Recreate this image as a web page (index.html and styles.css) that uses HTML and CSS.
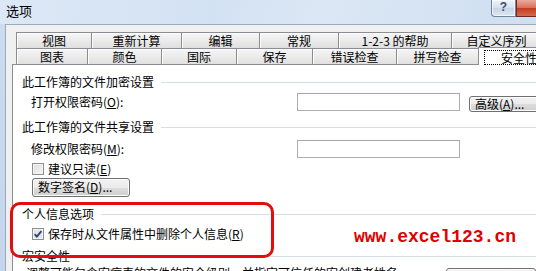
FILE: index.html
```html
<!DOCTYPE html>
<html lang="zh-CN">
<head>
<meta charset="utf-8">
<title>选项</title>
<link rel="stylesheet" href="styles.css">
</head>
<body>
<div class="window">
  <div class="titlebar">
    <span class="title">选项</span>
    <div class="caption-btns">
      <span class="cap-help">?</span>
      <span class="cap-close"></span>
    </div>
  </div>
  <div class="dialog">
    <div class="tabs">
      <div class="tabrow row1">
        <div class="tab w75">视图</div>
        <div class="tab w90">重新计算</div>
        <div class="tab w78">编辑</div>
        <div class="tab w79">常规</div>
        <div class="tab w113">1-2-3 的帮助</div>
        <div class="tab w90">自定义序列</div>
      </div>
      <div class="tabrow row2">
        <div class="tab w71">图表</div>
        <div class="tab w74">颜色</div>
        <div class="tab w75">国际</div>
        <div class="tab w76">保存</div>
        <div class="tab w84">错误检查</div>
        <div class="tab w82">拼写检查</div>
        <div class="tab selected w70"><span class="focus">安全性</span></div>
      </div>
    </div>
    <div class="panel">
      <div class="heading h1">此工作簿的文件加密设置</div>
      <div class="field f1">
        <span class="label">打开权限密码(<u>O</u>):</span>
        <span class="input"></span>
        <span class="btn btn-adv">高级(<u>A</u>)...</span>
      </div>
      <div class="heading h2">此工作簿的文件共享设置</div>
      <div class="field f2">
        <span class="label">修改权限密码(<u>M</u>):</span>
        <span class="input"></span>
      </div>
      <div class="check c1">
        <span class="box"></span>
        <span>建议只读(<u>E</u>)</span>
      </div>
      <div class="btn btn-sign">数字签名(<u>D</u>)...</div>
      <div class="heading h3">个人信息选项</div>
      <div class="check c2">
        <svg class="box-svg" width="12" height="12" viewBox="0 0 12 12">
          <rect x="0.5" y="0.5" width="11" height="11" fill="#f4f4f4" stroke="#8e8f8f"/>
          <rect x="2" y="2" width="8" height="8" fill="#e2e5ea"/>
          <path d="M2.6 6.2 L4.8 8.6 L9.4 3.2" fill="none" stroke="#2b3f74" stroke-width="1.8"/>
        </svg>
        <span>保存时从文件属性中删除个人信息(<u>R</u>)</span>
      </div>
      <div class="heading h4">宏安全性</div>
      <div class="macro-row">
        <span class="macro-text">调整可能包含宏病毒的文件的安全级别，并指定可信任的宏创建者姓名。</span>
        <span class="btn btn-macro">宏安全性(<u>S</u>)...</span>
      </div>
    </div>
  </div>
  <div class="highlight"></div>
  <div class="watermark">www.excel123.cn</div>
</div>
</body>
</html>
```

FILE: styles.css
```css
* { box-sizing: border-box; margin: 0; padding: 0; }

body {
  width: 536px;
  height: 271px;
  overflow: hidden;
  font-family: "Noto Sans CJK SC", "Liberation Sans", sans-serif;
  font-size: 12px;
  line-height: 14px;
  color: #000;
  background: #f0f0f0;
}

u { text-decoration: underline; }

.window {
  position: relative;
  width: 536px;
  height: 271px;
  overflow: hidden;
  display: flex;
  flex-direction: column;
  background: linear-gradient(#cddcee, #c4d6ec);
}

.titlebar {
  flex: none;
  height: 24px;
  display: flex;
  justify-content: space-between;
  background: linear-gradient(100deg, #dce8f5 0%, #d3e2f3 40%, #dbe7f4 60%, #cfdff1 100%);
}

.title {
  padding: 3px 0 0 6px;
  font-size: 13px;
  line-height: 15px;
}

.caption-btns {
  display: flex;
  align-items: flex-start;
}

.cap-help {
  width: 25px;
  height: 17px;
  border: 1px solid #6f839f;
  border-top: none;
  border-radius: 0 0 0 4px;
  background: linear-gradient(#eef3f9, #d6e1ee 50%, #c7d5e6 51%, #dbe6f2);
  color: #3c4e6a;
  font-family: "Liberation Sans", sans-serif;
  font-weight: bold;
  font-size: 12px;
  line-height: 15px;
  text-align: center;
  box-shadow: inset 0 0 0 1px rgba(255,255,255,0.6);
}

.cap-close {
  width: 20px;
  height: 17px;
  border: 1px solid #6d2a20;
  border-top: none;
  border-right: none;
  background: linear-gradient(#e9a99b, #d7705a 50%, #c23c1f 51%, #d46a4e);
}

.dialog {
  flex: 1;
  display: flex;
  flex-direction: column;
  margin-left: 5px;
  border-top: 1px solid #9aa9bb;
  border-left: 1px solid #9aa9bb;
  background: #f0f0f0;
  padding: 7px 0 0 6px;
}

.tabs {
  flex: none;
  margin-left: 3px;
}

.tabrow {
  display: flex;
  white-space: nowrap;
}

.row1 { height: 16px; margin-left: 1px; }
.row2 { height: 17px; margin-left: 1px; position: relative; }

.tab {
  flex: none;
  height: 100%;
  border-top: 1px solid #8a8d94;
  border-left: 1px solid #8a8d94;
  box-shadow: inset 1px 1px 0 #fdfdfd;
  background: linear-gradient(#f5f5f5, #ebebeb 50%, #dfdfdf);
  text-align: center;
  line-height: 15px;
}

.row2 .tab { line-height: 16px; }

.tab.selected {
  height: 18px;
  margin-top: -1px;
  background: #fff;
  box-shadow: none;
  text-align: left;
  padding: 2px 0 0 5px;
  line-height: 13px;
  position: relative;
  z-index: 1;
}

.focus {
  display: inline-block;
  border: 1px dotted #000;
  padding: 0 4px 0 16px;
  width: 70px;
  height: 15px;
  line-height: 13px;
}

.w70 { width: 70px; }
.w71 { width: 71px; }
.w74 { width: 74px; }
.w75 { width: 75px; }
.w76 { width: 76px; }
.w78 { width: 78px; }
.w79 { width: 79px; }
.w82 { width: 82px; }
.w84 { width: 84px; }
.w90 { width: 90px; }
.w113 { width: 113px; }

.panel {
  flex: 1;
  display: flex;
  flex-direction: column;
  border-top: 1px solid #8a8d94;
  border-left: 1px solid #8a8d94;
  background: #fff;
  padding: 10px 0 0 9px;
  margin-top: -1px;
  position: relative;
  z-index: 0;
}

.heading {
  display: flex;
  align-items: center;
  height: 14px;
  line-height: 14px;
  white-space: nowrap;
}

.heading::after {
  content: "";
  flex: 1;
  height: 1px;
  margin-left: 7px;
  background: #d5dfe5;
}

.h2 { margin-top: 8px; }
.h3 { margin-top: 10px; }
.h4 { margin-top: 8px; }

.field {
  display: flex;
  align-items: flex-start;
  height: 19px;
  padding-left: 9px;
  margin-top: 4px;
  white-space: nowrap;
}

.field > * { flex: none; }

.f2 { margin-top: 6px; }

.label {
  width: 266px;
  line-height: 15px;
  margin-top: 1px;
}

.input {
  width: 163px;
  height: 18px;
  border: 1px solid #abadb3;
  border-top-color: #a4a6ad;
  background: #fff;
}

.btn {
  display: inline-block;
  border: 1px solid #707070;
  border-radius: 3px;
  background: linear-gradient(#f2f2f2, #ebebeb 50%, #dddddd 51%, #cfcfcf);
  box-shadow: inset 0 0 0 1px #fcfcfc;
  white-space: nowrap;
}

.btn-adv {
  margin-left: 9px;
  margin-top: 3px;
  width: 78px;
  height: 16px;
  line-height: 13px;
  padding-left: 5px;
}

.check {
  display: flex;
  align-items: center;
  gap: 4px;
  height: 14px;
  padding-left: 10px;
  white-space: nowrap;
}

.c1 { margin-top: 3px; }
.c2 { margin-top: 6px; }

.box {
  flex: none;
  width: 12px;
  height: 12px;
  border: 1px solid #8e8f8f;
  background: linear-gradient(135deg, #dcdcdc, #f6f6f6);
  box-shadow: inset 0 0 0 1px #f4f4f4;
}

.box-svg { flex: none; }

.btn-sign {
  align-self: flex-start;
  margin-left: 10px;
  margin-top: 2px;
  width: 98px;
  height: 19px;
  line-height: 16px;
  padding-left: 5px;
}

.macro-row {
  display: flex;
  align-items: flex-start;
  margin-top: 3px;
  padding-left: 4px;
  white-space: nowrap;
}

.macro-row > * { flex: none; }

.macro-text {
  width: 420px;
  overflow: hidden;
  line-height: 14px;
}

.btn-macro {
  margin-top: 2px;
  width: 90px;
  height: 22px;
  padding-left: 6px;
  line-height: 18px;
}

.highlight {
  position: absolute;
  left: 10px;
  top: 202px;
  width: 264px;
  height: 56px;
  border: 3px solid #e30d0d;
  border-radius: 10px;
}

.watermark {
  position: absolute;
  left: 354px;
  top: 227px;
  font-family: "Liberation Mono", monospace;
  font-weight: bold;
  font-size: 18px;
  line-height: 20px;
  color: #e00000;
}
```
